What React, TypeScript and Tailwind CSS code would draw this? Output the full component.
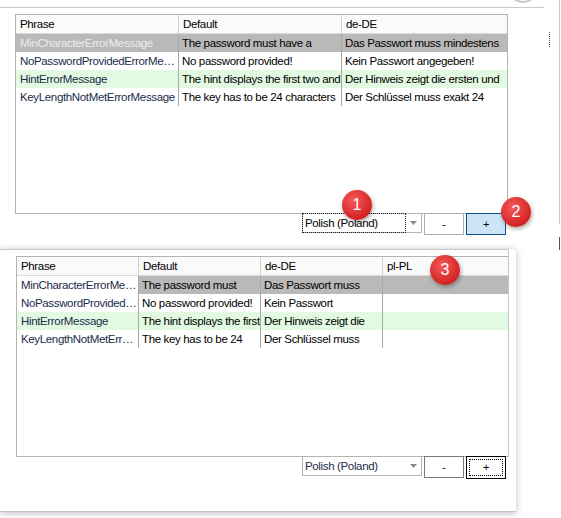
import React from "react";

type Row = {
  phrase: string;
  cells: string[];
  kind: "selected" | "plain" | "hint";
};

const topRows: Row[] = [
  { phrase: "MinCharacterErrorMessage", cells: ["The password must have a", "Das Passwort muss mindestens"], kind: "selected" },
  { phrase: "NoPasswordProvidedErrorMe…", cells: ["No password provided!", "Kein Passwort angegeben!"], kind: "plain" },
  { phrase: "HintErrorMessage", cells: ["The hint displays the first two and", "Der Hinweis zeigt die ersten und"], kind: "hint" },
  { phrase: "KeyLengthNotMetErrorMessage", cells: ["The key has to be 24 characters", "Der Schlüssel muss exakt 24"], kind: "plain" },
];

const bottomRows: Row[] = [
  { phrase: "MinCharacterErrorMe…", cells: ["The password must", "Das Passwort muss", ""], kind: "selected" },
  { phrase: "NoPasswordProvided…", cells: ["No password provided!", "Kein Passwort", ""], kind: "plain" },
  { phrase: "HintErrorMessage", cells: ["The hint displays the first", "Der Hinweis zeigt die", ""], kind: "hint" },
  { phrase: "KeyLengthNotMetErr…", cells: ["The key has to be 24", "Der Schlüssel muss", ""], kind: "plain" },
];

function Badge({ n, className }: { n: string; className: string }) {
  return (
    <div
      className={
        "absolute flex h-[30px] w-[30px] items-center justify-center rounded-full bg-[radial-gradient(circle_at_40%_35%,#f45a5a,#d21f1f_75%)] text-[16px] tracking-normal text-white shadow-[1px_2px_4px_rgba(0,0,0,0.35)] " +
        className
      }
    >
      {n}
    </div>
  );
}

function Grid({
  headers,
  widths,
  rows,
  phraseSelectedBg,
}: {
  headers: string[];
  widths: string[];
  rows: Row[];
  phraseSelectedBg: boolean;
}) {
  return (
    <div>
      <div className="flex h-[19px] border-b border-[#d9d9d9] bg-[#fafafa]">
        {headers.map((h, i) => (
          <div
            key={h}
            className={
              "flex items-center pl-[4px] pt-[2px] " +
              widths[i] +
              (i < headers.length - 1 ? " border-r border-[#d0d0d0]" : "")
            }
          >
            {h}
          </div>
        ))}
      </div>
      {rows.map((r) => {
        const rowBg = r.kind === "selected" ? "bg-[#b9b9b9]" : r.kind === "hint" ? "bg-[#e2f9e2]" : "bg-white";
        const phraseBg = r.kind === "selected" ? (phraseSelectedBg ? "bg-[#b9b9b9]" : "bg-white") : rowBg;
        const phraseColor = r.kind === "selected" && phraseSelectedBg ? "text-[#ececec]" : "text-[#1b2b4b]";
        return (
          <div key={r.phrase} className="flex h-[18px]">
            <div
              className={
                "flex items-center overflow-hidden whitespace-nowrap border-r border-[#a8a8a8] pl-[4px] pt-[2px] " +
                widths[0] +
                " " +
                phraseBg +
                " " +
                phraseColor
              }
            >
              {r.phrase}
            </div>
            {r.cells.map((c, i) => (
              <div
                key={i}
                className={
                  "flex items-center overflow-hidden whitespace-nowrap pl-[3px] pt-[2px] text-black " +
                  widths[i + 1] +
                  " " +
                  rowBg +
                  (i < r.cells.length - 1 ? " border-r border-[#a8a8a8]" : "")
                }
              >
                {c}
              </div>
            ))}
          </div>
        );
      })}
    </div>
  );
}

function Combo({ focused, className }: { focused: boolean; className: string }) {
  return (
    <div className={"flex h-[20px] w-[120px] border border-[#b4b4b4] bg-white " + className}>
      <div
        className={
          "flex flex-1 items-center pl-[2px] pt-px " +
          (focused ? "-m-px border border-dotted border-[#222] text-black" : "text-[#1b2b4b]")
        }
      >
        Polish (Poland)
      </div>
      <div className="flex w-[16px] items-center justify-center">
        <svg width="7" height="4" viewBox="0 0 7 4">
          <path d="M0 0h7L3.5 4z" fill="#8a8a8a" />
        </svg>
      </div>
    </div>
  );
}

export default function App() {
  return (
    <div
      className="relative h-[518px] w-[561px] overflow-hidden bg-white text-[11.5px] tracking-[-0.35px] text-black"
      style={{ fontFamily: '"Liberation Sans", Arial, sans-serif' }}
    >
      {/* background window */}
      <div className="relative h-[240px]">
        <div className="h-[8px] w-[544px] border-b border-[#c8c8c8]" />
        <div className="ml-[15px] mt-[6px] h-[200px] w-[493px] border border-[#b4b4b4]">
          <Grid
            headers={["Phrase", "Default", "de-DE"]}
            widths={["w-[163px]", "w-[163px]", "w-[165px]"]}
            rows={topRows}
            phraseSelectedBg={true}
          />
        </div>
        <div className="-mt-px flex">
          <Combo focused={true} className="ml-[302px]" />
          <button className="ml-[2px] h-[22px] w-[40px] border border-[#adadad] bg-white text-[11px]">-</button>
          <button className="ml-[2px] h-[22px] w-[40px] border border-[#0a4f8f] bg-[#cce4f7] text-[11px]">+</button>
        </div>

        <div className="absolute left-[508px] top-[-27px] h-[30px] w-[30px] rounded-full border-2 border-[#c4c4c4] bg-white" />
        <div className="absolute left-[549px] top-[32px] h-[15px] border-l border-dotted border-[#555]" />
        <div className="absolute left-[559px] top-0 h-[224px] w-px bg-[#c8c8c8]" />
        <div className="absolute left-[559px] top-[237px] h-[13px] w-px bg-[#555]" />
      </div>

      {/* foreground dialog */}
      <div className="mt-[7px] h-[263px] w-[516px] rounded-tr-[3px] border-b border-[#c4c4c4] bg-white shadow-[0_1px_7px_rgba(0,0,0,0.28)]">
        <div className="mt-[9px] h-[208px] w-[509px] border-r border-t border-[#c8c8c8]">
          <div className="ml-[16px] mt-[6px] h-[201px] border-b border-l border-t border-[#b4b4b4]">
            <Grid
              headers={["Phrase", "Default", "de-DE", "pl-PL"]}
              widths={["w-[122px]", "w-[122px]", "w-[122px]", "w-[125px]"]}
              rows={bottomRows}
              phraseSelectedBg={false}
            />
          </div>
        </div>
        <div className="-mt-px flex">
          <Combo focused={false} className="ml-[302px]" />
          <button className="ml-[2px] h-[22px] w-[40px] border border-[#7a7a7a] bg-white text-[11px]">-</button>
          <button className="ml-[2px] flex h-[23px] w-[40px] items-center justify-center border border-black bg-white p-[2px] text-[11px]">
            <span className="flex h-full w-full items-center justify-center border border-dotted border-black">+</span>
          </button>
        </div>
      </div>

      <Badge n="1" className="left-[342px] top-[190px]" />
      <Badge n="2" className="left-[501px] top-[197px]" />
      <Badge n="3" className="left-[430px] top-[255px]" />
    </div>
  );
}
